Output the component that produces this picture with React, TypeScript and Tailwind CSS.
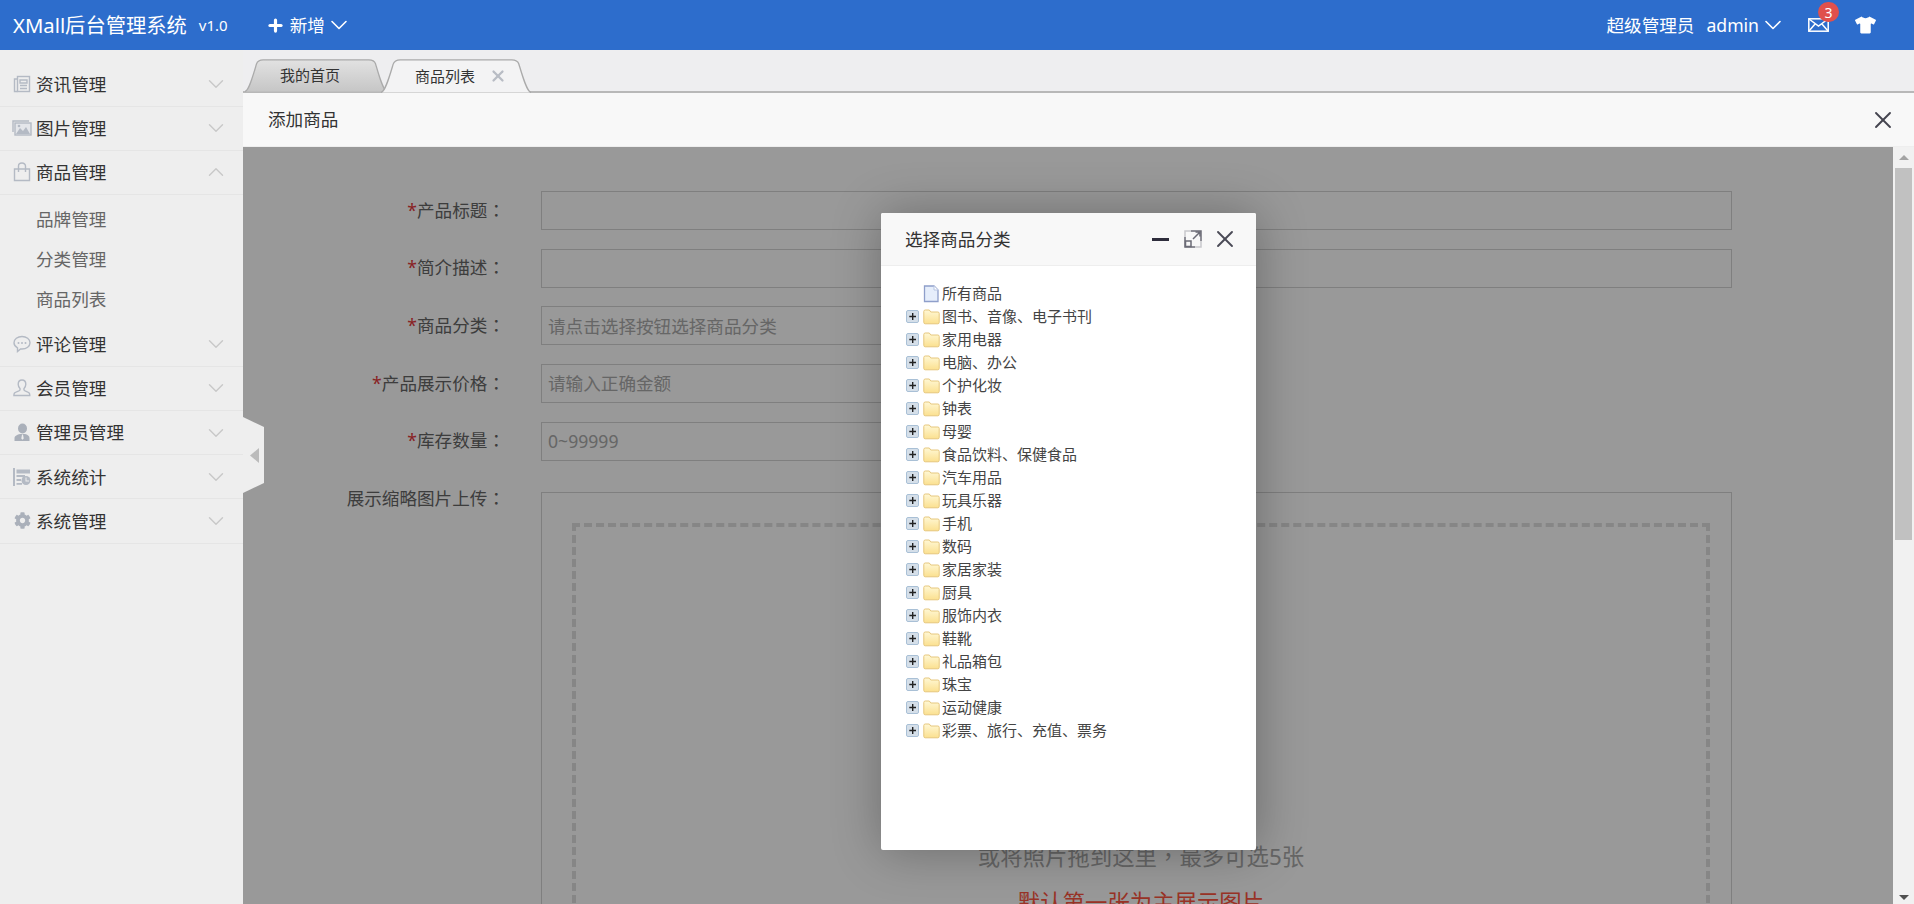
import React from "react";
import { ChevronDown, ChevronUp, Plus, X } from "lucide-react";
import { FaCog, FaTshirt } from "react-icons/fa";

const FONT = "font-['Noto_Sans','Noto_Sans_CJK_SC',sans-serif]";
// TC cut has the centred full-width colon and comma seen in the screenshot
const CENTERED_PUNCT = "font-['Noto_Sans_CJK_TC',sans-serif]";

// menu icons are small pictures in the original sprite font, redrawn here
function NewsIcon() {
  return (
    <svg width="18" height="18" viewBox="0 0 18 18" fill="none" stroke="#b4bac4" strokeWidth="1.4">
      <rect x="4.5" y="1.5" width="12" height="15" />
      <path d="M4.5 4H1.5v12.5h3" />
      <path d="M7 5h7v3H7zM7 10.5h7M7 13.5h7" />
    </svg>
  );
}

function PictureIcon() {
  return (
    <svg width="20" height="18" viewBox="0 0 20 18" fill="none" stroke="#b4bac4" strokeWidth="1.4">
      <path d="M1 13V2h16" />
      <rect x="3" y="4" width="16" height="12" fill="#e4e6ea" />
      <path d="M4 15l4-6 3 3 3-4 4 7z" fill="#b4bac4" stroke="none" />
      <circle cx="7" cy="7" r="1.3" fill="#b4bac4" stroke="none" />
    </svg>
  );
}

function BagIcon() {
  return (
    <svg width="18" height="20" viewBox="0 0 18 20" fill="none" stroke="#b4bac4" strokeWidth="1.4">
      <path d="M1.5 7h15v11.5h-15z" />
      <path d="M5.5 10V4a3.5 3 0 0 1 7 0v6" />
    </svg>
  );
}

function CommentIcon() {
  return (
    <svg width="18" height="18" viewBox="0 0 18 18" fill="none" stroke="#b4bac4" strokeWidth="1.4">
      <path d="M9 1.5c4.4 0 8 2.7 8 6.3s-3.600 6.200-8 6.200c-.7 0-1 0-1.500-.1L4.500 16.500V12.800C2.400 11.700 1 9.900 1 7.800 1 4.200 4.600 1.500 9 1.500z" />
      <circle cx="5.500" cy="8" r="1" fill="#b4bac4" stroke="none" />
      <circle cx="9" cy="8" r="1" fill="#b4bac4" stroke="none" />
      <circle cx="12.500" cy="8" r="1" fill="#b4bac4" stroke="none" />
    </svg>
  );
}

function UserIcon() {
  return (
    <svg width="18" height="18" viewBox="0 0 18 18" fill="none" stroke="#b4bac4" strokeWidth="1.4">
      <path d="M9 1c2.400 0 3.800 1.800 3.800 4.200 0 1.800-.8 3.300-1.800 4.300v1.500c0 1 3.500 1.500 5.200 3 .6.600.6 1.500.6 2.500H.9c0-1 0-1.900.6-2.500C3.200 12.500 7 12 7 11V9.500C6 8.500 5.200 7 5.200 5.200 5.200 2.800 6.600 1 9 1z" />
    </svg>
  );
}

function AdminIcon() {
  return (
    <svg width="18" height="19" viewBox="0 0 18 19" fill="#aab0ba">
      <ellipse cx="9.500" cy="5.500" rx="4.500" ry="5" />
      <path d="M1.500 18v-3c0-2 3-3.500 5.500-4h5c2.500.5 4.500 2 4.500 4v3z" />
      <path d="M9 11.500h1l.7 4-1.200 1.200-1.200-1.200z" fill="#eeeeee" />
    </svg>
  );
}

function StatsIcon() {
  return (
    <svg width="18" height="18" viewBox="0 0 18 18" fill="#b4bac4">
      <path d="M0 0h2v18H0z" />
      <path d="M3.500 1.500H17v4H3.500zM3.500 7H12v2H3.500zM3.500 11H8v2H3.500zM3.500 15H9v1.800H3.500z" />
      <circle cx="13" cy="12.500" r="4.500" />
      <path d="M12.500 9.500h1v3h2.500v1h-3.500z" fill="#eeeeee" />
    </svg>
  );
}

const menus = [
  { name: "资讯管理", icon: <NewsIcon /> },
  { name: "图片管理", icon: <PictureIcon /> },
  { name: "商品管理", icon: <BagIcon />, open: true, items: ["品牌管理", "分类管理", "商品列表"] },
  { name: "评论管理", icon: <CommentIcon /> },
  { name: "会员管理", icon: <UserIcon /> },
  { name: "管理员管理", icon: <AdminIcon /> },
  { name: "系统统计", icon: <StatsIcon /> },
  { name: "系统管理", icon: <FaCog className="h-[17px] w-[17px] text-[#aab0ba]" /> },
];

const fields = [
  { label: "产品标题", full: true },
  { label: "简介描述", full: true },
  { label: "商品分类", hint: "请点击选择按钮选择商品分类" },
  { label: "产品展示价格", hint: "请输入正确金额" },
  { label: "库存数量", hint: "0~99999" },
];

const categories = [
  "图书、音像、电子书刊",
  "家用电器",
  "电脑、办公",
  "个护化妆",
  "钟表",
  "母婴",
  "食品饮料、保健食品",
  "汽车用品",
  "玩具乐器",
  "手机",
  "数码",
  "家居家装",
  "厨具",
  "服饰内衣",
  "鞋靴",
  "礼品箱包",
  "珠宝",
  "运动健康",
  "彩票、旅行、充值、票务",
];

function Sidebar() {
  return (
    <aside className="w-[243px] shrink-0 bg-[#eeeeee] pt-[12.500px] text-[17.6px] text-[#333333]">
      {menus.map((m) => (
        <div key={m.name}>
          <div className="flex h-[44.200px] items-center border-b border-[#e5e5e5]">
            <span className="flex w-[36px] shrink-0 justify-center pl-[8px]">{m.icon}</span>
            <span className="flex-1">{m.name}</span>
            {m.open ? (
              <ChevronUp className="mr-[14px] h-[26px] w-[26px] text-[#c8c8c8]" strokeWidth={1.300} />
            ) : (
              <ChevronDown className="mr-[14px] h-[26px] w-[26px] text-[#c8c8c8]" strokeWidth={1.300} />
            )}
          </div>
          {m.items && (
            <div className="pb-[3.500px] pl-[36px] pt-[4px] text-[#666666]">
              {m.items.map((s) => (
                <div key={s} className="flex h-[40px] items-center">
                  {s}
                </div>
              ))}
            </div>
          )}
        </div>
      ))}
    </aside>
  );
}

function TabShape({ active }: { active?: boolean }) {
  return (
    <svg className="absolute inset-0 h-full w-full" viewBox="0 0 150 33" preserveAspectRatio="none">
      <defs>
        <linearGradient id="tabGrey" x1="0" y1="0" x2="0" y2="1">
          <stop offset="0" stopColor="#e2e2e2" />
          <stop offset="1" stopColor="#c6c6c6" />
        </linearGradient>
      </defs>
      <path
        d="M1 32.500C5 32 9 18 13 5 14 2 16 .8 20 .8h110c4 0 6 1 7 4 4 13 8 27 12 27.700"
        fill={active ? "#f3f3f4" : "url(#tabGrey)"}
        stroke="#aaaaaa"
        strokeWidth="1.300"
      />
    </svg>
  );
}

function Tabs() {
  return (
    <div className="flex h-[43px] shrink-0 items-end border-b-2 border-[#b8b8b8] bg-[#eeeef0] pl-[1px] text-[15px] text-[#333333]">
      <div className="relative -mb-[1px] flex h-[33px] w-[144px] items-center justify-center pr-[12px]">
        <TabShape />
        <span className="relative">我的首页</span>
      </div>
      <div className="relative -mb-[2px] -ml-[8px] flex h-[34px] w-[152px] items-center pl-[35px]">
        <TabShape active />
        <span className="relative">商品列表</span>
        <X className="relative ml-[14px] h-[18px] w-[18px] text-[#b8bcc4]" strokeWidth={3} />
      </div>
    </div>
  );
}

function FieldLabel({ text, required }: { text: string; required?: boolean }) {
  return (
    <div className="w-[298px] shrink-0 pr-[36px] text-right leading-[26px]">
      {required && <span className="text-[#e4393c]">*</span>}
      {text}
      <span className={CENTERED_PUNCT}>：</span>
    </div>
  );
}

function Form() {
  return (
    <div className="relative flex-1 overflow-hidden bg-white text-[17.6px] text-[#666666]">
      <div className="pt-[44px]">
        {fields.map((f) => (
          <div key={f.label} className="mb-[18.700px] flex h-[39px] items-center">
            <div className="pb-[2px]">
              <FieldLabel text={f.label} required />
            </div>
            <div
              className={`flex h-[39px] items-center border border-[#d4d4d4] pl-[6px] text-[#aaaaaa] ${
                f.full ? "w-[1191px]" : "w-[600px]"
              }`}
            >
              {f.hint}
            </div>
          </div>
        ))}
        <div className="mt-[31px] flex">
          <div className="-mt-[7px]">
            <FieldLabel text="展示缩略图片上传" />
          </div>
          <div className="h-[500px] w-[1191px] border border-[#d4d4d4] pl-[30px] pr-[21px] pt-[30px]">
            <div className="h-[500px] border-4 border-dashed border-[#dfdfdf] pt-[309px] text-center text-[22.4px] leading-[38px]">
              <div className="text-[#aaaaaa]">
                或将照片拖到这里<span className={CENTERED_PUNCT}>，</span>最多可选5张
              </div>
              <div className="mt-[8px] text-[#ff5540]">默认第一张为主展示图片</div>
            </div>
          </div>
        </div>
      </div>
      <div className="absolute inset-0 bg-black/40" />
    </div>
  );
}

function Scrollbar() {
  return (
    <div className="flex w-[21px] shrink-0 flex-col items-center bg-[#f1f1f1]">
      <div className="mt-[8px] h-0 w-0 border-x-[5px] border-b-[5px] border-x-transparent border-b-[#a3a3a3]" />
      <div className="mt-[8px] h-[372px] w-[17px] bg-[#c1c1c1]" />
      <div className="mb-[4px] mt-auto h-0 w-0 border-x-[5px] border-t-[5px] border-x-transparent border-t-[#505050]" />
    </div>
  );
}

function TreeRow({ label, leaf }: { label: string; leaf?: boolean }) {
  return (
    <div className="flex h-[23px] items-center">
      <span className="flex w-[17px] shrink-0">
        {!leaf && (
          <svg width="13" height="13" viewBox="0 0 13 13">
            <rect x=".5" y=".5" width="12" height="12" rx="1.500" fill="#d5dfe9" stroke="#a9c0d6" />
            <path d="M6 3h1.400v2.800H10v1.400H7.400V10H6V7.200H3.300V5.800H6z" fill="#222222" />
          </svg>
        )}
      </span>
      {leaf ? (
        <svg width="17" height="18" viewBox="0 0 17 18">
          <path d="M1.500 1h9.500l4 4v11.500h-13.500z" fill="#e6eefb" stroke="#8f9fca" strokeWidth="1.300" />
          <path d="M11 1v4h4" fill="#ffffff" stroke="#b6c4e2" />
        </svg>
      ) : (
        <svg width="17" height="17" viewBox="0 0 17 17">
          <defs>
            <linearGradient id="folderFill" x1="0" y1="0" x2="0" y2="1">
              <stop offset="0" stopColor="#fff8d6" />
              <stop offset="1" stopColor="#fbe08f" />
            </linearGradient>
          </defs>
          <path d="M.8 3.500Q.8 2 2.300 2h4l1.500 2h7q1.400 0 1.400 1.400v9q0 1.400-1.400 1.400H2.200q-1.400 0-1.400-1.400z" fill="url(#folderFill)" stroke="#e6c77d" />
        </svg>
      )}
      <span className="ml-[2px] text-[15px] leading-none text-[#444444]">{label}</span>
    </div>
  );
}

function CategoryDialog() {
  return (
    <div className="absolute left-[638px] top-[66px] flex h-[637px] w-[375px] flex-col rounded-[2px] bg-white shadow-[1px_1px_50px_rgba(0,0,0,0.3)]">
      <div className="flex h-[53px] shrink-0 items-center rounded-t-[2px] border-b border-[#eeeeee] bg-[#f8f8f8] pl-[24px] pr-[17px] text-[17.6px] text-[#333333]">
        <span className="flex-1">选择商品分类</span>
        <span className="h-[3px] w-[17px] bg-[#2e2d3c]" />
        <svg className="ml-[15px]" width="18" height="18" viewBox="0 0 18 18" fill="none" stroke="#6b6b76" strokeWidth="1.500">
          <path d="M7 1h10v10M1 7v10h10" />
          <path d="M1 7V1h6M17 11v6h-6" stroke="#c8c8cc" />
          <rect x="1.500" y="11" width="5.500" height="5.500" />
          <path d="M9 9l7-7M11.500 2H16v4.500" />
        </svg>
        <X className="ml-[9px] h-[28px] w-[28px] text-[#4a4a56]" strokeWidth={1.600} />
      </div>
      <div className="pl-[25px] pt-[16px]">
        <TreeRow label="所有商品" leaf />
        {categories.map((c) => (
          <TreeRow key={c} label={c} />
        ))}
      </div>
    </div>
  );
}

export default function App() {
  return (
    <div className={`flex h-screen w-full flex-col overflow-hidden bg-white ${FONT}`}>
      <header className="flex h-[50px] shrink-0 items-center bg-[#2d6dcc] pl-[13px] text-white">
        <span className="text-[20.300px]">XMall后台管理系统</span>
        <span className="ml-[12px] text-[15px]">v1.0</span>
        <Plus className="ml-[38px] h-[19px] w-[19px]" strokeWidth={4} />
        <span className="ml-[5px] text-[17.6px]">新增</span>
        <ChevronDown className="h-[28px] w-[28px]" strokeWidth={1.400} />
        <span className="ml-auto text-[17.6px]">超级管理员</span>
        <span className="ml-[12px] text-[17.6px]">admin</span>
        <ChevronDown className="h-[28px] w-[28px]" strokeWidth={1.400} />
        <span className="relative ml-[21px]">
          <svg className="block" width="21" height="14" viewBox="0 0 21 14" fill="none" stroke="white" strokeWidth="1.500">
            <rect x=".8" y=".8" width="19.400" height="12.400" />
            <path d="M1 1l9.500 7L20 1M1 13l6.500-7.500M20 13l-6.500-7.500" />
          </svg>
          <span className="absolute left-[10px] top-[-16px] flex h-[20px] w-[21px] items-center justify-center rounded-full bg-[#e0504d] text-[14px] text-white">
            3
          </span>
        </span>
        <FaTshirt className="ml-[26px] mr-[38px] h-[18px] w-[21px]" />
      </header>
      <div className="relative flex min-h-0 flex-1">
        <Sidebar />
        <main className="flex min-w-0 flex-1 flex-col">
          <Tabs />
          <div className="flex h-[54px] shrink-0 items-center border-b border-[#eeeeee] bg-[#f8f8f8] pl-[25px] pr-[17px] text-[17.6px] text-[#333333]">
            <span className="flex-1">添加商品</span>
            <X className="h-[28px] w-[28px] text-[#44444f]" strokeWidth={1.600} />
          </div>
          <div className="relative flex min-h-0 flex-1">
            <Form />
            <Scrollbar />
            <CategoryDialog />
          </div>
        </main>
        {/* collapse handle sits over the edge of the content */}
        <svg className="absolute left-[243px] top-[367px]" width="22" height="76" viewBox="0 0 22 76">
          <path d="M0 0l21 10v56L0 76z" fill="#eeeeee" />
          <path d="M16 31v15l-9-7.500z" fill="#bbbbbb" />
        </svg>
      </div>
    </div>
  );
}
